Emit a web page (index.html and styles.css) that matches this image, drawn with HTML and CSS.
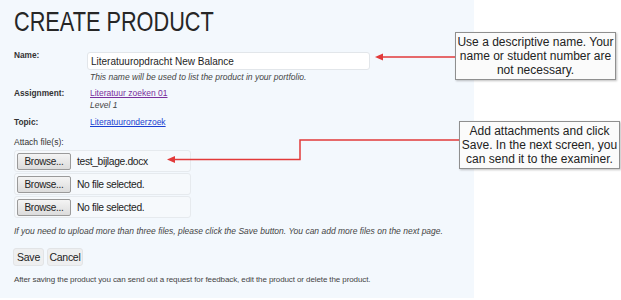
FILE: index.html
```html
<!DOCTYPE html>
<html>
<head>
<meta charset="utf-8">
<link rel="stylesheet" href="styles.css">
</head>
<body>
<div class="page">
  <div class="panel">
    <h1 class="title">CREATE PRODUCT</h1>
    <div class="field field-name">
      <div class="label">Name:</div>
      <div class="value">
        <div class="input">Literatuuropdracht New Balance</div>
        <div class="hint">This name will be used to list the product in your portfolio.</div>
      </div>
    </div>
    <div class="field field-assign">
      <div class="label">Assignment:</div>
      <div class="value">
        <a class="link visited" href="#">Literatuur zoeken 01</a>
        <div class="hint">Level 1</div>
      </div>
    </div>
    <div class="field field-topic">
      <div class="label">Topic:</div>
      <div class="value">
        <a class="link" href="#">Literatuuronderzoek</a>
      </div>
    </div>
    <div class="attach-label">Attach file(s):</div>
    <div class="files">
      <div class="file-row"><span class="browse">Browse...</span><span class="fname">test_bijlage.docx</span></div>
      <div class="file-row"><span class="browse">Browse...</span><span class="fname">No file selected.</span></div>
      <div class="file-row"><span class="browse">Browse...</span><span class="fname">No file selected.</span></div>
    </div>
    <div class="note">If you need to upload more than three files, please click the Save button. You can add more files on the next page.</div>
    <div class="actions">
      <span class="btn btn-save">Save</span><span class="btn btn-cancel">Cancel</span>
    </div>
    <div class="after">After saving the product you can send out a request for feedback, edit the product or delete the product.</div>
  </div>

  <svg class="arrows" width="621" height="300" viewBox="0 0 621 300">
    <line x1="456" y1="57" x2="381" y2="57" stroke="#e23a3a" stroke-width="1.5"/>
    <polygon points="375,57 383,53.5 383,60.5" fill="#e23a3a"/>
    <polyline points="460,140 300,140 300,159.5 174,159.5" fill="none" stroke="#e23a3a" stroke-width="1.5"/>
    <polygon points="167,159.5 175,156 175,163" fill="#e23a3a"/>
  </svg>

  <div class="callout callout-1">Use a descriptive name. Your name or student number are not necessary.</div>
  <div class="callout callout-2">Add attachments and click Save. In the next screen, you can send it to the examiner.</div>
</div>
</body>
</html>
```

FILE: styles.css
```css
* { box-sizing: border-box; }
html, body { margin: 0; padding: 0; background: #ffffff; }
body { font-family: "Liberation Sans", Arial, sans-serif; color: #333; }

.page { position: relative; width: 621px; height: 300px; overflow: hidden; }

.panel {
  width: 474px;
  height: 298px;
  background: #f3f8fd;
  padding: 6px 0 0 14px;
  display: flex;
  flex-direction: column;
}

.title {
  margin: 0;
  font-weight: normal;
  font-size: 28px;
  line-height: 32px;
  color: #262626;
  transform: scaleX(0.775);
  transform-origin: left center;
  white-space: nowrap;
}

.field { display: grid; grid-template-columns: 73px 1fr; font-size: 8.5px; line-height: 12px; }
.label { font-weight: bold; color: #333; font-size: 8.3px; line-height: 12px; }
.value { font-size: 8.5px; line-height: 12px; }

.field-name { margin-top: 14px; }
.field-name .label { margin-top: -3px; }
.input {
  width: 283px;
  height: 18px;
  background: #fff;
  border: 1px solid #e2e6ea;
  border-radius: 3px;
  font-size: 10px;
  color: #1e1e1e;
  padding: 2px 0 0 3px;
  line-height: 13px;
}
.hint { font-style: italic; color: #444; font-size: 8.5px; line-height: 12px; padding-left: 3px; margin-top: 1px; }

.field-assign { margin-top: 4px; }
.link { font-size: 8.5px; line-height: 12px; color: #1a3fd1; text-decoration: underline; padding-left: 3px; display: inline-block; vertical-align: top; }
.link.visited { color: #7a2f9c; }
.field-assign .hint { margin-top: 0; }
.field-topic { margin-top: 5px; }

.attach-label { font-size: 8.5px; color: #333; margin-top: 8px; line-height: 12px; }

.files { display: flex; flex-direction: column; gap: 1px; margin-top: 2px; width: 177px; }
.file-row {
  height: 22px;
  border: 1px solid #e6eaee;
  border-radius: 3px;
  background: #f6f9fc;
  display: flex;
  align-items: center;
  padding-left: 2px;
}
.browse {
  width: 54px;
  height: 17px;
  border: 1px solid #9a9a9a;
  border-radius: 2px;
  background: linear-gradient(#f4f4f4, #dcdcdc);
  font-size: 10px;
  letter-spacing: -0.3px;
  color: #222;
  text-align: center;
  line-height: 15px;
}
.fname { font-size: 10.3px; letter-spacing: -0.35px; color: #222; margin-left: 6px; }

.note { font-style: italic; font-size: 8.5px; color: #444; margin-top: 7px; line-height: 12px; white-space: nowrap; }

.actions { display: flex; gap: 3px; margin-top: 11px; margin-left: -1px; }
.btn {
  height: 18px;
  background: #eeeff0;
  border: 1px solid #e2e4e6;
  border-radius: 3px;
  font-size: 10.5px;
  letter-spacing: -0.2px;
  line-height: 16px;
  color: #222;
  text-align: center;
}
.btn-save { width: 31px; }
.btn-cancel { width: 36px; letter-spacing: -0.3px; }

.after { font-size: 8px; letter-spacing: -0.1px; color: #444; margin-top: 8px; line-height: 12px; white-space: nowrap; }

.arrows { position: absolute; left: 0; top: 0; pointer-events: none; }

.callout {
  position: absolute;
  width: 161px;
  height: 48px;
  background: #fbfbfb;
  border: 1px solid #8f8f8f;
  box-shadow: 1px 1px 2px rgba(0,0,0,0.25);
  font-size: 12px;
  line-height: 14px;
  color: #222;
  text-align: center;
  padding-top: 2px;
}
.callout-1 { left: 455px; top: 32px; }
.callout-2 { left: 459px; top: 121px; }
```
